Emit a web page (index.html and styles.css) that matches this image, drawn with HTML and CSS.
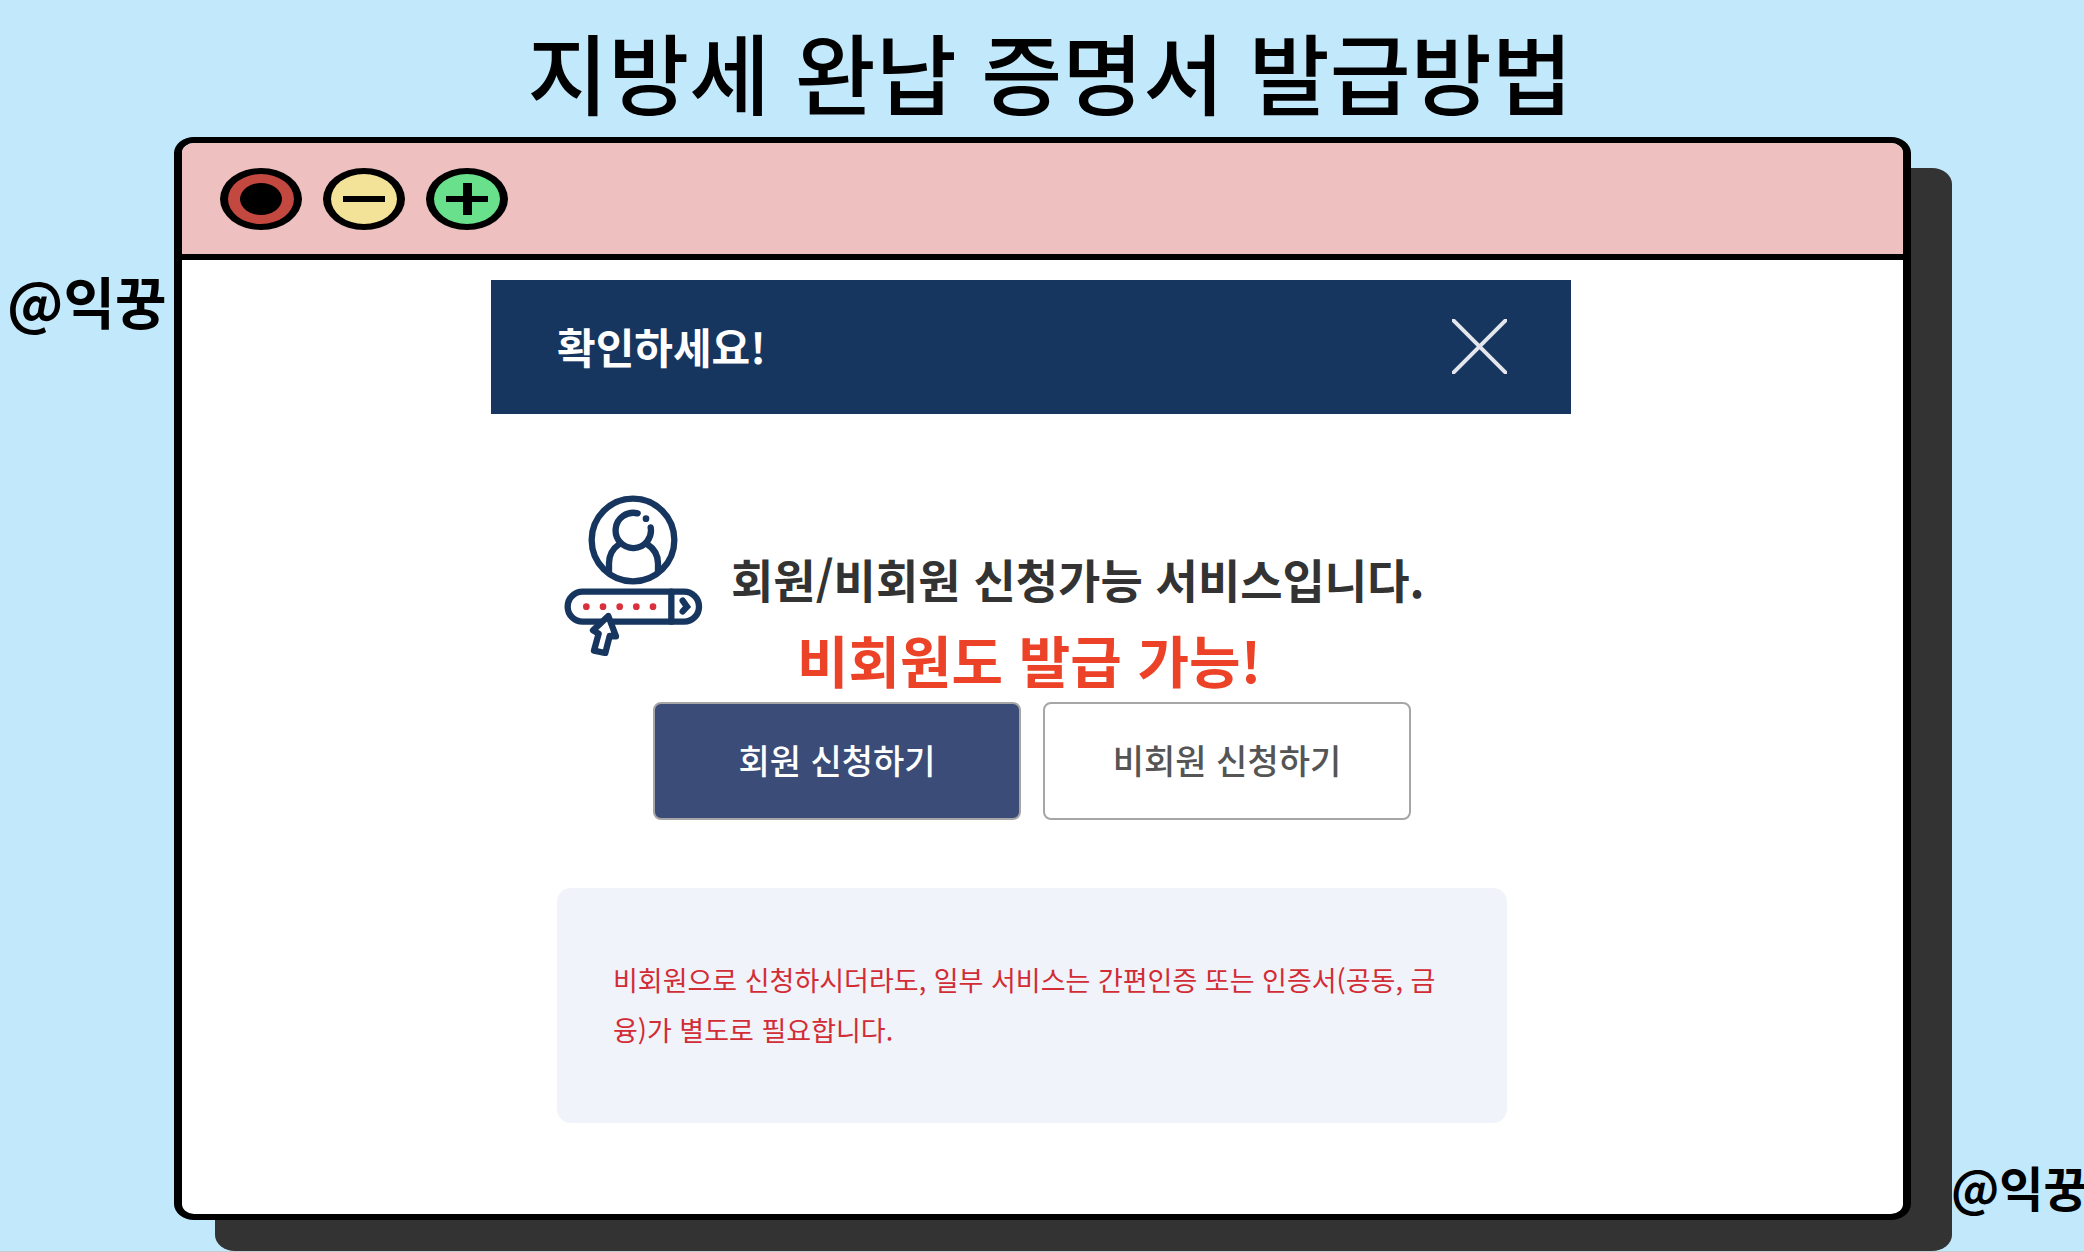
FILE: index.html
```
<!DOCTYPE html>
<html lang="ko">
<head>
    <meta charset="utf-8">
    <title>지방세 완납 증명서 발급방법</title>
    <meta name="viewport" content="width=device-width, initial-scale=1">
    <link rel="stylesheet" href="styles.css">
</head>
<body>
    <div class="page">
        <h1>지방세 완납 증명서 발급방법</h1>

        <div class="stage">
            <div class="handle handle-left">@익꿍</div>

            <main class="window">
                <!-- Title bar -->
                <div class="titlebar">
                    <button class="dot red" aria-label="닫기">
                        <svg viewBox="0 0 42 32"><ellipse cx="21" cy="16" rx="21" ry="16"/></svg>
                    </button>
                    <button class="dot yellow" aria-label="최소화">
                        <svg viewBox="0 0 42 32"><path d="M0 13h42v6H0z"/></svg>
                    </button>
                    <button class="dot green" aria-label="최대화">
                        <svg viewBox="0 0 42 32"><path d="M0 13h42v6H0zM17 0h9v32h-9z"/></svg>
                    </button>
                </div>

                <!-- Dialog -->
                <section class="dialog">
                    <header class="dialog-head">
                        <h2>확인하세요!</h2>
                        <button class="close" aria-label="창 닫기">
                            <svg viewBox="0 0 55 55"><path d="M0 0l55 55M55 0L0 55"/></svg>
                        </button>
                    </header>

                    <div class="dialog-body">
                        <div class="service">
                            <svg class="member-icon" viewBox="40 40 420 486">
                                <g class="line">
                                    <circle cx="250" cy="178" r="124"/>
                                    <path d="M264 98A53 53 0 1 0 303 140"/>
                                    <path d="M178 272V248C178 222 190 203 209 190M325 272V248C325 222 312 203 292 190"/>
                                    <rect x="54" y="333" width="394" height="90" rx="45"/>
                                    <path d="M365 333v90"/>
                                    <path d="M399 360l13 18-13 14"/>
                                </g>
                                <circle class="navy" cx="289" cy="114" r="10"/>
                                <path class="pointer" d="M176 406L130 449 147 459 133 510 167 517 180 466 199 467z"/>
                                <g class="pins">
                                    <circle cx="110" cy="378" r="10"/>
                                    <circle cx="160" cy="378" r="10"/>
                                    <circle cx="210" cy="378" r="10"/>
                                    <circle cx="260" cy="378" r="10"/>
                                    <circle cx="310" cy="378" r="10"/>
                                </g>
                            </svg>
                            <div class="service-text">
                                <p class="lead">회원/비회원 신청가능 서비스입니다.</p>
                                <p class="callout">비회원도 발급 가능!</p>
                            </div>
                        </div>

                        <div class="actions">
                            <button class="btn primary">회원 신청하기</button>
                            <button class="btn">비회원 신청하기</button>
                        </div>

                        <p class="note">비회원으로 신청하시더라도, 일부 서비스는 간편인증 또는 인증서(공동, 금융)가 별도로 필요합니다.</p>
                    </div>
                </section>
            </main>

            <div class="handle handle-right">@익꿍</div>
        </div>
    </div>
</body>
</html>
```

FILE: styles.css
```
* { margin: 0; padding: 0; box-sizing: border-box; }
body { font-family: "Noto Sans CJK KR", sans-serif; background: #c2e8fb; color: #000; }
button { font: inherit; cursor: pointer; }
svg { display: block; }

.page { overflow: hidden; min-height: 100vh; border-bottom: 1px solid #c4ccd2; }
h1 { height: 137px; padding-left: 16px; font-size: 88px; font-weight: 500; line-height: 140px; text-align: center; white-space: nowrap; }

.stage { display: grid; grid-template-columns: 174px minmax(0, 1fr) 173px; padding-bottom: 31px; }
.handle { font-weight: 700; white-space: nowrap; }
.handle-left { padding: 123px 0 0 7px; font-size: 56px; line-height: 80px; }
.handle-right { align-self: end; padding: 0 0 4px 40px; font-size: 48px; line-height: 60px; }

/* Window */
.window { background: #fff; border: solid #000; border-width: 6px 8px; border-radius: 20px / 16px; box-shadow: 41px 31px 0 #333; }
.titlebar { display: flex; align-items: center; gap: 21px; height: 117px; padding-left: 38px; background: #eec0c0; border-bottom: 6px solid #000; border-radius: 12px 12px 0 0 / 10px 10px 0 0; }
.dot { display: grid; place-items: center; width: 82px; height: 62px; border: solid #000; border-width: 6px 8px; border-radius: 50%; }
.dot svg { width: 42px; height: 32px; }
.red { background: #c3483f; }
.yellow { background: #f2e399; }
.green { background: #69e18c; }

/* Dialog */
.dialog { padding: 20px 332px 91px 309px; }
.dialog-head { display: flex; align-items: center; justify-content: space-between; height: 134px; padding: 0 64px 2px 66px; background: #16365f; color: #fff; }
h2 { font-size: 42px; font-weight: 700; line-height: 60px; }
.close { width: 55px; height: 55px; background: none; border: 0; }
.close path { fill: none; stroke: #e3e7ed; stroke-width: 4; }
.dialog-body { padding: 80px 64px 0 66px; }

.service { display: flex; gap: 28px; padding-left: 6px; }
.member-icon { flex: none; width: 140px; height: 162px; }
.line { fill: none; stroke: #16365f; stroke-width: 19; stroke-linecap: round; }
.navy { fill: #16365f; }
.pointer { fill: #fff; stroke: #16365f; stroke-width: 19; stroke-linejoin: round; }
.pins { fill: #d9303b; }
.service-text { padding: 44px 0 2px; white-space: nowrap; }
.lead { color: #333; font-size: 46px; font-weight: 700; line-height: 80px; }
.callout { padding-left: 66px; color: #ec4227; font-size: 56px; font-weight: 700; line-height: 82px; }

.actions { display: flex; justify-content: center; gap: 22px; }
.btn { width: 368px; height: 118px; padding-bottom: 4px; background: #fff; border: 2px solid #a6a6a6; border-radius: 8px; color: #555; font-size: 34px; font-weight: 500; }
.primary { background: #3a4c77; color: #fff; }

.note { margin-top: 68px; padding: 67px 56px 68px; background: #f0f3f9; border-radius: 14px; color: #d22c35; font-size: 27px; line-height: 50px; }
```
